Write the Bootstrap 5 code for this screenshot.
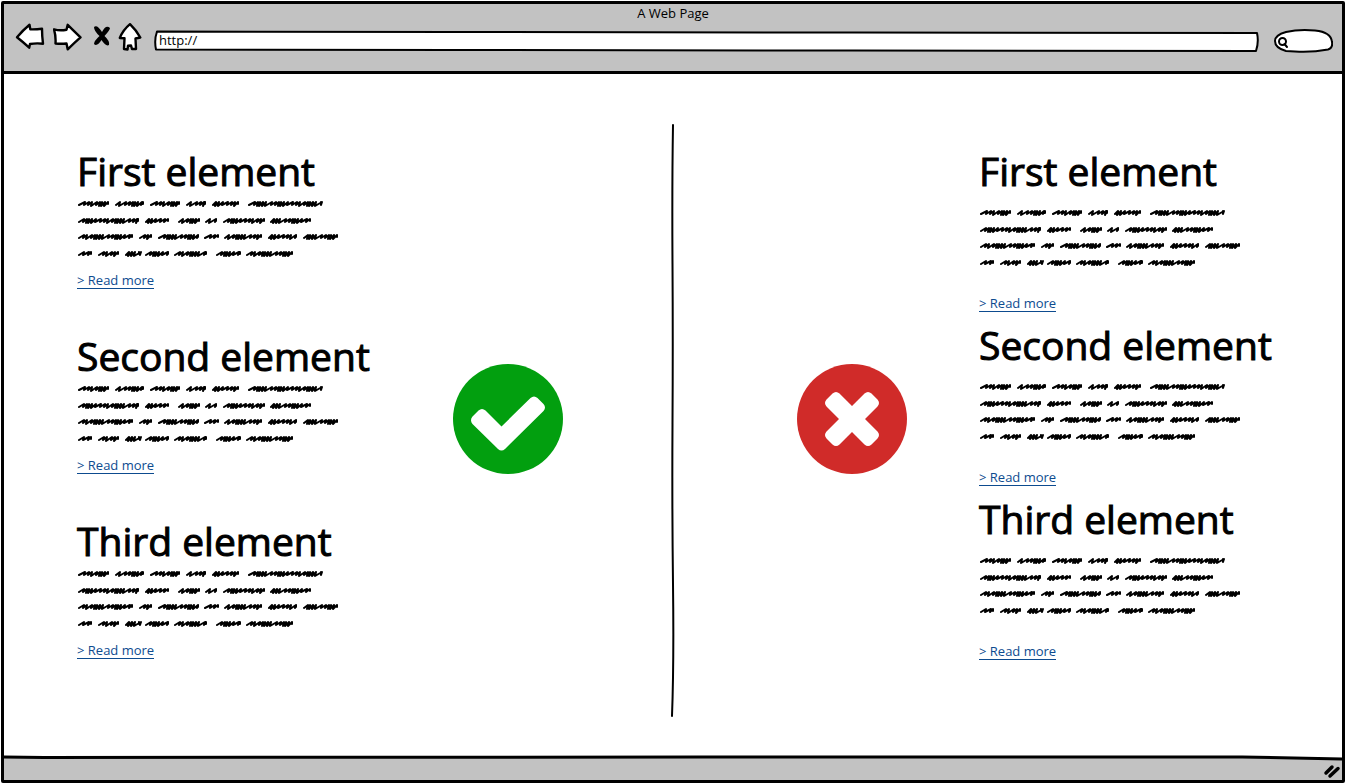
<!DOCTYPE html>
<html lang="en">
<head>
<meta charset="utf-8">
<meta name="viewport" content="width=device-width, initial-scale=1">
<title>A Web Page</title>
<link href="https://cdn.jsdelivr.net/npm/bootstrap@5.3.0/dist/css/bootstrap.min.css" rel="stylesheet">
<style>
  body { font-family: "Open Sans", Lato, sans-serif; color: #000; background: #fff; font-size: 13px; line-height: 20px; }
  .sketch-frame { min-height: 100vh; padding: 1px; }
  .sketch-window { border: 3px solid #000; border-radius: 2px; }
  .chrome-bar { background: #c2c2c2; }
  .top-bar { border-bottom: 3px solid #000; height: 70px; }
  .page-title { line-height: 19px; }
  .tools { padding: 0 9px 0 11px; }
  .ink { fill: #fff; stroke: #000; stroke-width: 2; stroke-linejoin: round; stroke-linecap: round; }
  .tool-icon .ink { stroke-width: 2.400px; }
  .tool-btn { background: none; border: 0; padding: 0; line-height: 0; }
  .field-outline { inset: 0; pointer-events: none; }
  .field-outline path { vector-effect: non-scaling-stroke; }
  .address input, .finder input { background: none; border: 0; outline: 0; color: #000; position: relative; font-size: 13px; line-height: 20px; }
  .address { height: 22px; margin: 7px 0 0 10px; }
  .address input { padding: 0 6px; height: 20px; }
  .finder { width: 60px; height: 24px; margin: 6px 0 0 14px; }
  .finder input { padding: 0 8px 0 22px; height: 22px; }
  main { padding: 50px 0 38px; }
  .half { flex: 1 1 50%; }
  .half-good { padding: 0 108px 0 73px; }
  .half-bad { padding: 0 69px 0 122px; }
  .stories { width: 294px; padding-top: 27px; }
  .half-good .stories { gap: 47px; }
  .half-bad .stories { gap: 13px; }
  .stories h2 { font-size: 39px; line-height: 40px; margin: 0 0 6px; font-weight: 400; white-space: nowrap; -webkit-text-stroke: 1px #000; }
  .half-bad h2 { margin-bottom: 15px; }
  .scribble { display: block; width: 264px; height: 62px; fill: none; stroke: #000; stroke-width: 2; stroke-linejoin: round; stroke-linecap: round; }
  .more { color: #0d4b8f; border-bottom: 1px solid #0d4b8f; text-decoration: none; line-height: 16px; margin-top: 13px; font-size: 13px; }
  .half-bad .more { margin-top: 27px; }
  .verdict { width: 110px; height: 110px; margin-top: 240px; }
  .rule-line { width: 4px; flex: none; }
  .foot-edge { height: 6px; }
</style>
</head>
<body>
<svg width="0" height="0" class="position-absolute" aria-hidden="true">
  <symbol id="scribble" viewBox="0 0 264 62"><path id="scribble-path"/></symbol>
</svg>
<div class="sketch-frame d-flex">
<div class="sketch-window flex-grow-1 d-flex flex-column">
  <header class="chrome-bar top-bar">
    <div class="page-title text-center">A Web Page</div>
    <div class="tools d-flex align-items-start">
      <button class="tool-btn" type="button" aria-label="Back"><svg class="tool-icon" width="30" height="28" viewBox="15 23 30 28"><path class="ink" d="M17 37.3Q23 30 29.5 24.7L30.3 29.3Q36 29.5 42 28.7Q42 36 43 43.7Q36 43 30 44L29.2 47.7Q23 42 17 37.3Z"/></svg></button>
      <button class="tool-btn ms-2" type="button" aria-label="Forward"><svg class="tool-icon" width="30" height="28" viewBox="53 23 30 28"><path class="ink" d="M54 29.3Q60 31 66.5 29.7L67.7 24.8Q74 31 80.5 37.3Q74 43 67.7 49.3L66.5 43.5Q61 44 55.5 43.5Q56 36 54 29.3Z"/></svg></button>
      <button class="tool-btn ms-2" type="button" aria-label="Stop"><svg width="22" height="28" viewBox="91 23 22 28"><path d="M94 27Q97 24 102 32Q106 24 110 28Q110 30 104.500 36Q110 41 109 45Q106 47 101.500 40Q97 47 94 44Q94 41 99.500 36Q94 31 94 27Z"/></svg></button>
      <button class="tool-btn ms-1" type="button" aria-label="Home"><svg class="tool-icon" width="26" height="28" viewBox="117 23 26 28"><path class="ink" d="M130 24.2Q136 30 140.300 37.500L135.500 38.500L136 49H132L131 45.500L128 45.700L127.500 49.500L124 49L124.500 38.300L119.800 38Q123 30 130 24.200Z"/></svg></button>
      <label class="address position-relative flex-grow-1">
        <svg class="field-outline position-absolute w-100 h-100" viewBox="0 0 1106 22" preserveAspectRatio="none"><path class="ink" d="M4 1.500L300 2L700 2.500L1104 3Q1106 12 1103 21L700 20.500L300 20L3 19.500Q1 10 4 1.500Z"/></svg>
        <input class="w-100" type="text" value="http://" aria-label="Address">
      </label>
      <label class="finder position-relative">
        <svg class="field-outline position-absolute" width="60" height="24" viewBox="1273 29 60 24"><path class="ink" d="M1286 32Q1299 29 1315 30.500Q1331 32 1332 42Q1333 48 1328 49.500Q1312 52.500 1295 51.500L1286 51Q1275 48 1275 41Q1275 35 1286 32Z"/><circle class="ink" cx="1282.500" cy="41.500" r="3.500"/><path class="ink" d="M1284.500 44L1287 47"/></svg>
        <input class="w-100" type="search" aria-label="Search">
      </label>
    </div>
  </header>

  <main class="d-flex flex-grow-1">
    <section class="half half-good d-flex justify-content-between">
      <div class="stories d-flex flex-column">
        <article class="d-flex flex-column align-items-start"><h2>First element</h2><svg class="scribble"><use href="#scribble"/></svg><a class="more" href="#">&gt; Read more</a></article>
        <article class="d-flex flex-column align-items-start"><h2>Second element</h2><svg class="scribble"><use href="#scribble"/></svg><a class="more" href="#">&gt; Read more</a></article>
        <article class="d-flex flex-column align-items-start"><h2>Third element</h2><svg class="scribble"><use href="#scribble"/></svg><a class="more" href="#">&gt; Read more</a></article>
      </div>
      <svg class="verdict flex-shrink-0" viewBox="0 0 110 110" role="img" aria-label="Good"><circle cx="55" cy="55" r="55" fill="#029f0f"/><path d="M25.500 46.500Q29 43.500 32.500 46.500L48.500 62.500L77.500 34Q81 31 84.500 34L90.500 40Q93.500 43.500 90.500 47L52 85Q48.500 88 45 85L19.500 60Q16.500 56 19.500 52.500Z" fill="#fff"/></svg>
    </section>

    <svg class="rule-line" viewBox="0 0 4 593" preserveAspectRatio="none" aria-hidden="true"><path d="M2 1Q1 60 1.500 140T1.500 300T2 460T1 592" fill="none" stroke="#000" stroke-width="2" stroke-linecap="round"/></svg>

    <section class="half half-bad d-flex justify-content-between">
      <svg class="verdict flex-shrink-0" viewBox="0 0 110 110" role="img" aria-label="Bad"><circle cx="55" cy="55" r="55" fill="#d02b29"/><path d="M35.500 29.500Q39 26.500 42.500 29.500L55 42L67.500 29.500Q71 26.500 74.500 29.500L80.500 35.500Q83.500 39 80.500 42.500L68 55L80.500 67.500Q83.500 71 80.500 74.500L74.500 80.500Q71 83.500 67.500 80.500L55 68L42.500 80.500Q39 83.500 35.500 80.500L29.500 74.500Q26.500 71 29.500 67.500L42 55L29.500 42.500Q26.500 39 29.500 35.500Z" fill="#fff"/></svg>
      <div class="stories d-flex flex-column">
        <article class="d-flex flex-column align-items-start"><h2>First element</h2><svg class="scribble"><use href="#scribble"/></svg><a class="more" href="#">&gt; Read more</a></article>
        <article class="d-flex flex-column align-items-start"><h2>Second element</h2><svg class="scribble"><use href="#scribble"/></svg><a class="more" href="#">&gt; Read more</a></article>
        <article class="d-flex flex-column align-items-start"><h2>Third element</h2><svg class="scribble"><use href="#scribble"/></svg><a class="more" href="#">&gt; Read more</a></article>
      </div>
    </section>
  </main>

  <svg class="foot-edge w-100 d-block" viewBox="0 0 1340 6" preserveAspectRatio="none" aria-hidden="true"><path d="M0 2H1240L1340 4V6H0Z" fill="#c2c2c2"/><path d="M0 2L40 2.500L700 2H1240L1340 4" fill="none" stroke="#000" stroke-width="3"/></svg>
  <footer class="chrome-bar d-flex justify-content-end">
    <svg width="20" height="19" viewBox="1322 761 20 19" aria-hidden="true"><path d="M1326 773L1332 767M1330 776L1338 768.500" fill="none" stroke="#000" stroke-width="3.500" stroke-linecap="round"/></svg>
  </footer>
</div>
</div>
<script src="https://cdn.jsdelivr.net/npm/bootstrap@5.3.0/dist/js/bootstrap.bundle.min.js"></script>
<script>
  // Word extents (start, end) for each line of placeholder text
  const lines = [
    [[0,32],[37,67],[72,103],[108,129],[134,162],[170,245]],
    [[0,62],[67,92],[100,123],[127,140],[145,188],[192,234]],
    [[0,56],[61,75],[80,122],[126,142],[146,185],[190,220],[225,261]],
    [[0,15],[20,42],[47,63],[67,92],[96,130],[138,164],[168,216]]
  ];
  const baselines = [8, 25, 41, 58];
  const steps = [5, 4, 3, 5, 3, 2, 3, 3, 6, 4, 3, 2, 3, 4];
  let n = 0, d = '';
  lines.forEach((words, row) => words.forEach(([from, to]) => {
    let x = from + 2;
    const y = baselines[row];
    d += `M${x} ${y}`;
    while (x < to - 5) {
      const step = steps[n++ % steps.length];
      const low = step < 4 ? y + 1 : y;
      d += `L${x + step + 1} ${y - 3}L${x + step} ${low}`;
      x += step;
    }
    d += `L${to - 1} ${y - 3}L${to - 1} ${y - 1}`;
  }));
  document.getElementById('scribble-path').setAttribute('d', d);
</script>
</body>
</html>
